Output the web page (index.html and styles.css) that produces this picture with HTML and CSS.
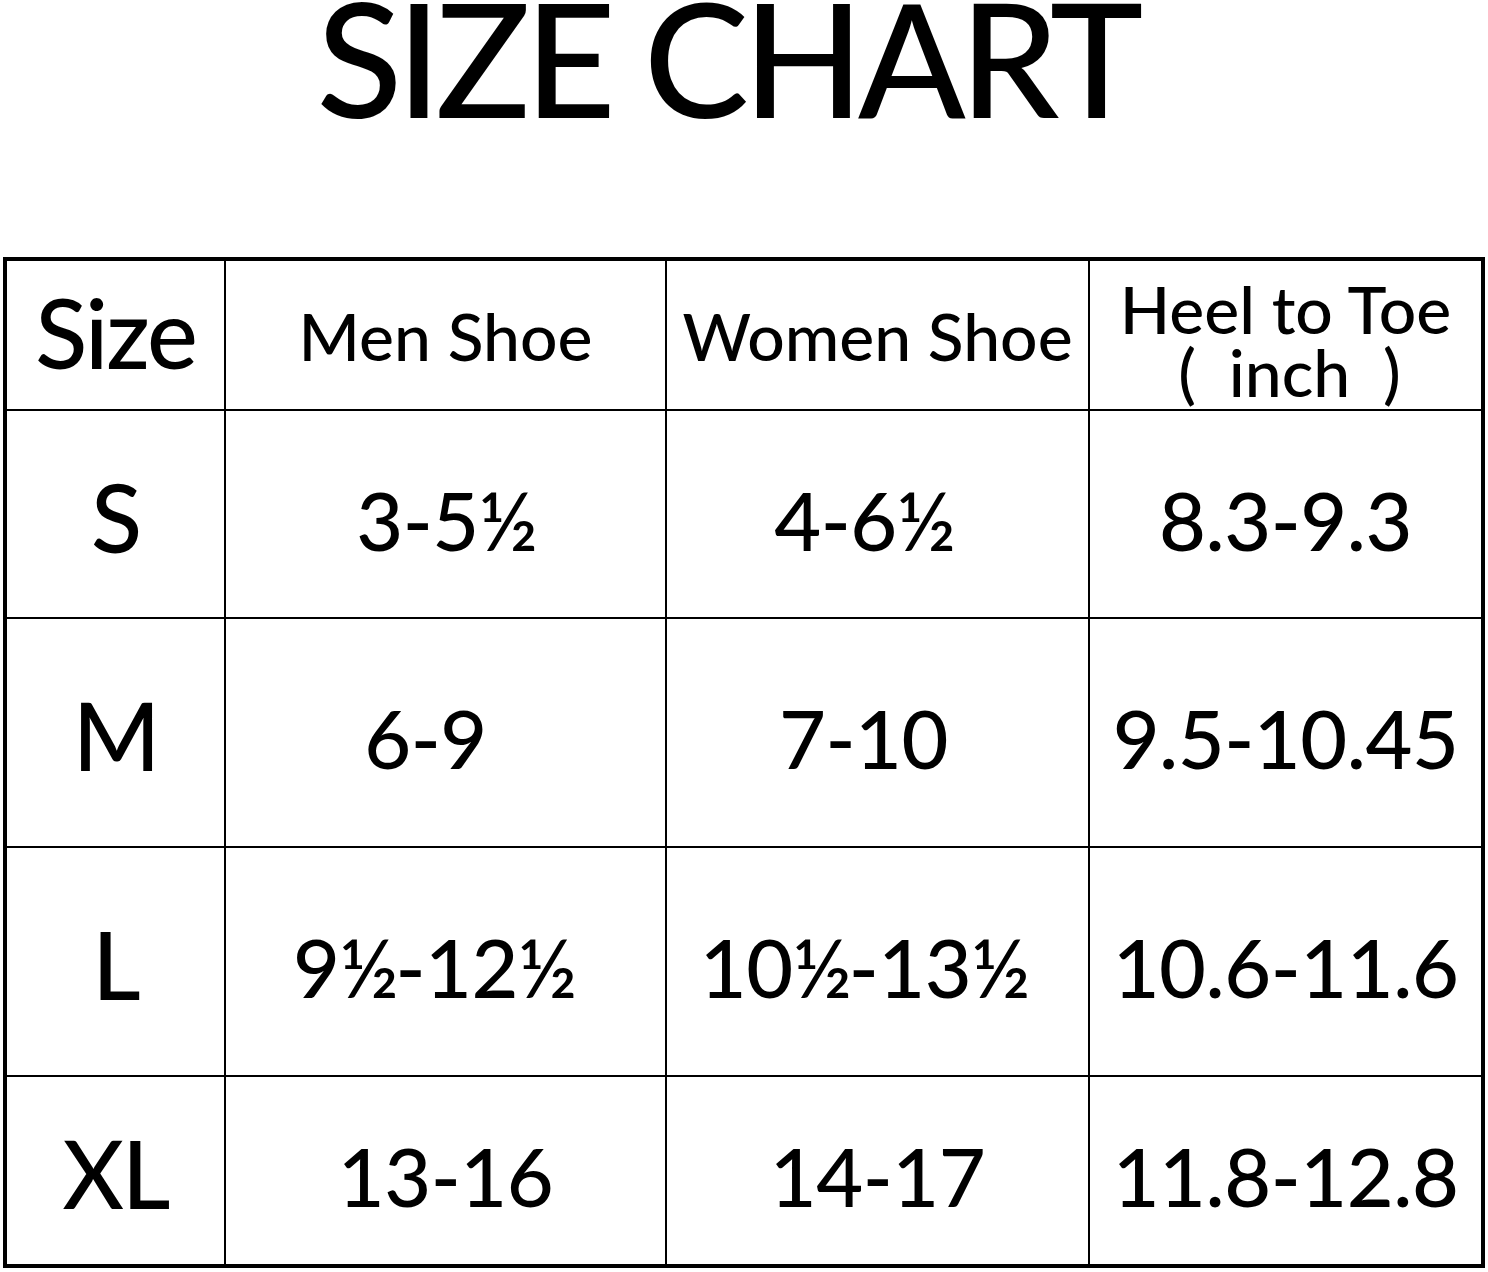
FILE: index.html
```html
<!DOCTYPE html>
<html lang="en">
<head>
<meta charset="utf-8">
<title>Size Chart</title>
<link rel="stylesheet" href="styles.css">
</head>
<body>
<div class="page">
  <h1 class="title">SIZE CHART</h1>
  <div class="chart">
    <div class="cell head size-head">Size</div>
    <div class="cell head">Men Shoe</div>
    <div class="cell head">Women Shoe</div>
    <div class="cell head heel"><span class="line">Heel to Toe</span><span class="line unit">( inch )</span></div>

    <div class="cell label">S</div>
    <div class="cell num">3-5<span class="half">½</span></div>
    <div class="cell num off-l">4-6<span class="half">½</span></div>
    <div class="cell num">8.3-9.3</div>

    <div class="cell label">M</div>
    <div class="cell num off-xl">6-9</div>
    <div class="cell num off-l">7-10</div>
    <div class="cell num">9.5-10.45</div>

    <div class="cell label">L</div>
    <div class="cell num off-m">9<span class="half">½</span>-12<span class="half">½</span></div>
    <div class="cell num off-l">10<span class="half">½</span>-13<span class="half">½</span></div>
    <div class="cell num">10.6-11.6</div>

    <div class="cell label">XL</div>
    <div class="cell num">13-16</div>
    <div class="cell num">14-17</div>
    <div class="cell num">11.8-12.8</div>
  </div>
</div>
</body>
</html>
```
FILE: styles.css
```css
html, body {
  margin: 0;
  padding: 0;
  background: #fff;
}
body {
  font-family: Lato, "Open Sans", "DejaVu Sans", sans-serif;
  font-weight: 500;
  color: #000;
}
.page {
  padding: 0 3px;
}
.title {
  margin: 0 0 143px 0;
  font-size: 158px;
  font-weight: 500;
  line-height: 114px;
  height: 114px;
  text-align: center;
  letter-spacing: -6px;
  padding-right: 34px;
}
.chart {
  width: 1482px;
  box-sizing: border-box;
  border: 4px solid #000;
  background: #000;
  display: grid;
  grid-template-columns: 217px 439px 421px 391px;
  grid-template-rows: 148px 206px 227px 227px 187px;
  gap: 2px;
}
.cell {
  background: #fff;
  display: flex;
  align-items: center;
  justify-content: center;
  text-align: center;
  white-space: nowrap;
}
.head {
  font-size: 66px;
  letter-spacing: 0;
}
.size-head {
  font-size: 96px;
  letter-spacing: -2px;
  padding-bottom: 8px;
}
.heel {
  flex-direction: column;
  line-height: 63px;
  padding-top: 10px;
}
.line {
  display: block;
  height: 63px;
}
.unit {
  word-spacing: 16px;
  padding-left: 8px;
}
.label {
  font-size: 94px;
  letter-spacing: -2px;
  padding-top: 4px;
}
.num {
  font-size: 81px;
  letter-spacing: -0.5px;
  padding-top: 10px;
}
.half {
  letter-spacing: -3px;
}
.off-m {
  padding-right: 24px;
}
.off-l {
  padding-right: 28px;
}
.off-xl {
  padding-right: 40px;
}
```
